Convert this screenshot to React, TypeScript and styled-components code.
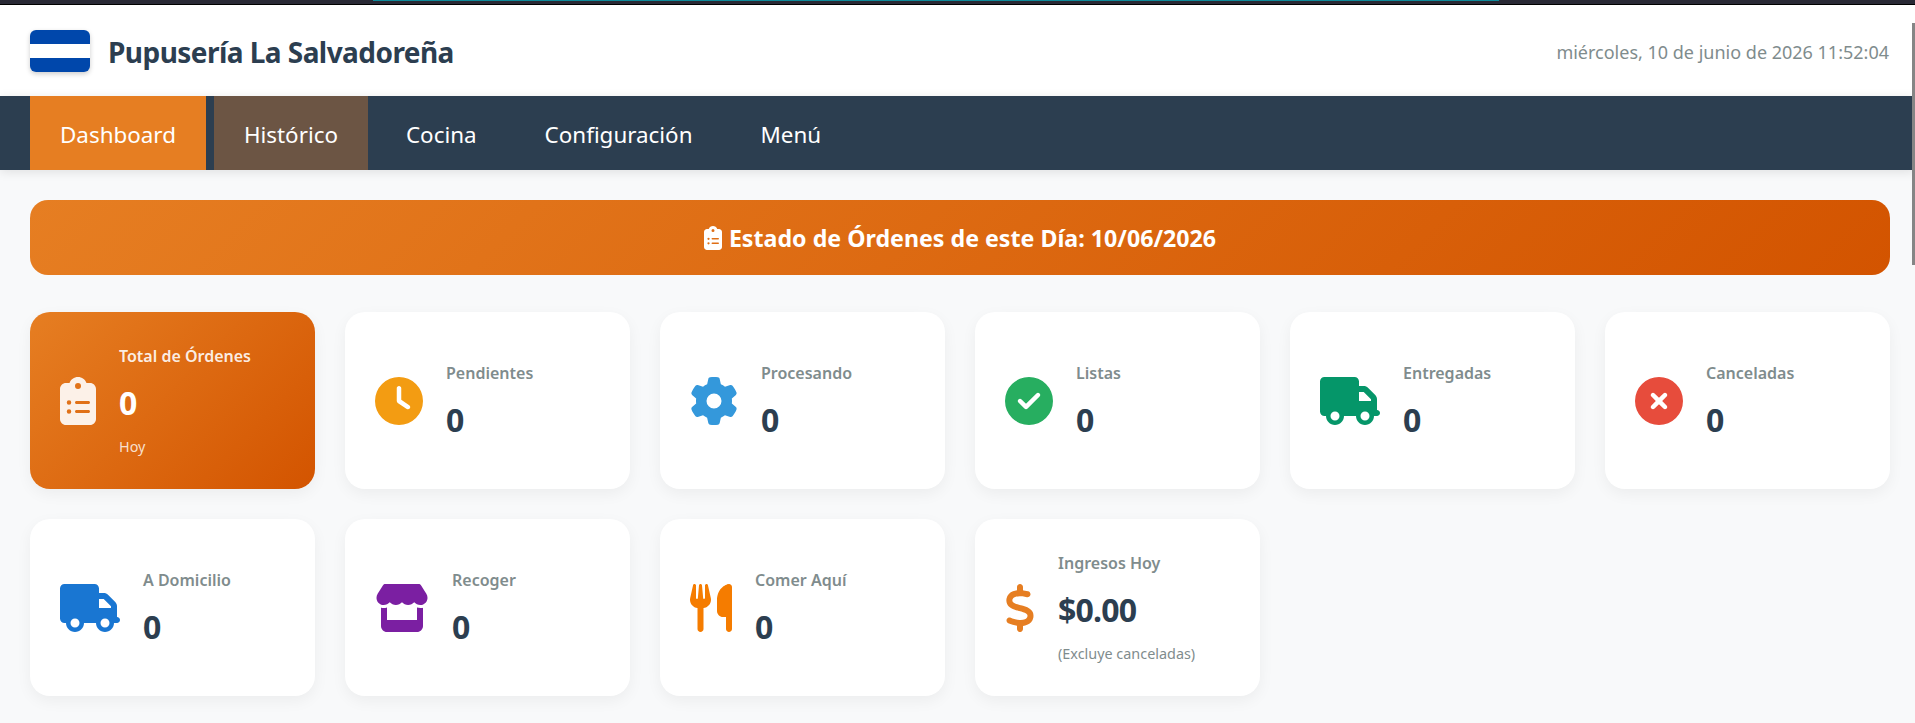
// modules
import React from 'react';
import styled, { createGlobalStyle } from 'styled-components';
import {
  FaCircleCheck,
  FaCircleXmark,
  FaClipboardList,
  FaClock,
  FaDollarSign,
  FaGear,
  FaStore,
  FaTruck,
  FaUtensils
} from 'react-icons/fa6';
import type { IconType } from 'react-icons';


const GlobalStyle = createGlobalStyle`
  html, body {
    margin: 0;
    height: 100%;
    overflow: hidden;
    background-color: #f8f9fa;
    font-family: "Noto Sans", "Open Sans", sans-serif;
  }
`;

const TopStrip = styled.div`
  height: 5px;
  box-sizing: border-box;
  padding-left: 373px;
  background-color: #292935;
  border-bottom: 1px solid #000;
`;

const TopLine = styled.div`
  width: 1126px;
  height: 1px;
  background-color: #0e8a9a;
`;

const ScrollThumb = styled.div`
  position: fixed;
  top: 23px;
  right: 0;
  width: 3px;
  height: 242px;
  background-color: #858585;
`;

const Header = styled.header`
  display: flex;
  align-items: center;
  justify-content: space-between;
  height: 91px;
  padding: 0 26px 0 30px;
  background-color: #fff;
`;

const Brand = styled.div`
  display: flex;
  align-items: center;
  gap: 18px;
`;

const Flag = styled.div`
  display: flex;
  flex-direction: column;
  width: 60px;
  height: 42px;
  border-radius: 6px;
  overflow: hidden;
  box-shadow: 0 2px 5px rgba(0, 0, 0, .2);
`;

const Stripe = styled.div<{ $white?: boolean }>`
  flex: 1;
  background-color: ${({ $white }) => $white ? '#fff' : '#0047ab'};
`;

const Title = styled.h1`
  margin: 2px 0 0;
  font-size: 28px;
  font-weight: 700;
  letter-spacing: -.55px;
  color: #2c3e50;
`;

const DateText = styled.div`
  margin-top: 2px;
  font-size: 18px;
  color: #7f8c8d;
`;

const Nav = styled.nav`
  display: flex;
  gap: 8px;
  height: 74px;
  padding-left: 30px;
  background-color: #2c3e50;
  box-shadow: 0 2px 10px rgba(0, 0, 0, .1);
`;

const Tab = styled.a<{ $state?: 'active' | 'hover' }>`
  display: flex;
  align-items: center;
  padding: 2px 30px 0;
  font-size: 22.4px;
  color: #fff;
  background-color: ${({ $state }) =>
    $state === 'active' ? '#e67e22' : $state === 'hover' ? '#6c5544' : 'transparent'};
`;

const Main = styled.main`
  padding: 30px 25px 0 30px;
`;

const Banner = styled.div`
  display: flex;
  align-items: center;
  justify-content: center;
  gap: 7px;
  height: 75px;
  margin-bottom: 37px;
  border-radius: 18px;
  font-size: 23.2px;
  font-weight: 700;
  color: #fff;
  background: linear-gradient(135deg, #e67e22, #d35400);

  svg {
    width: 18px;
    height: 24px;
  }
`;

const Grid = styled.div`
  display: grid;
  grid-template-columns: repeat(6, 285px);
  grid-auto-rows: 177px;
  gap: 30px;
`;

const Card = styled.div<{ $highlight?: boolean }>`
  display: flex;
  align-items: center;
  gap: 23px;
  padding: 0 30px;
  border-radius: 20px;
  color: ${({ $highlight }) => $highlight ? '#fff' : '#2c3e50'};
  background: ${({ $highlight }) => $highlight ? 'linear-gradient(135deg, #e67e22, #d35400)' : '#fff'};
  box-shadow: 0 5px 15px rgba(0, 0, 0, .05);
`;

// font awesome glyphs keep their own width at a 48px height
const IconSlot = styled.div<{ $color: string, $width: number }>`
  display: flex;
  flex-shrink: 0;
  color: ${({ $color }) => $color};

  svg {
    width: ${({ $width }) => $width}px;
    height: 48px;
  }
`;

const CardBody = styled.div`
  display: flex;
  flex-direction: column;
`;

const Label = styled.div<{ $highlight?: boolean }>`
  font-size: 16px;
  line-height: 22px;
  font-weight: 600;
  color: ${({ $highlight }) => $highlight ? 'rgba(255, 255, 255, .9)' : '#7f8c8d'};
`;

const Value = styled.div`
  margin-top: 17px;
  font-size: 32px;
  line-height: 38px;
  font-weight: 700;
  letter-spacing: -.8px;
`;

const Note = styled.div<{ $highlight?: boolean }>`
  margin-top: 16px;
  font-size: 14.4px;
  line-height: 18px;
  color: ${({ $highlight }) => $highlight ? 'rgba(255, 255, 255, .8)' : '#7f8c8d'};
`;


interface Stat {
  label: string,
  value: string,
  icon: IconType,
  iconWidth: number,
  color: string,
  note?: string,
  highlight?: boolean
}

const stats: Stat[] = [
  { label: 'Total de Órdenes', value: '0', icon: FaClipboardList, iconWidth: 36, color: 'rgba(255, 255, 255, .9)', note: 'Hoy', highlight: true },
  { label: 'Pendientes', value: '0', icon: FaClock, iconWidth: 48, color: '#f39c12' },
  { label: 'Procesando', value: '0', icon: FaGear, iconWidth: 48, color: '#3498db' },
  { label: 'Listas', value: '0', icon: FaCircleCheck, iconWidth: 48, color: '#27ae60' },
  { label: 'Entregadas', value: '0', icon: FaTruck, iconWidth: 60, color: '#059669' },
  { label: 'Canceladas', value: '0', icon: FaCircleXmark, iconWidth: 48, color: '#e74c3c' },
  { label: 'A Domicilio', value: '0', icon: FaTruck, iconWidth: 60, color: '#1976d2' },
  { label: 'Recoger', value: '0', icon: FaStore, iconWidth: 54, color: '#7b1fa2' },
  { label: 'Comer Aquí', value: '0', icon: FaUtensils, iconWidth: 42, color: '#f57c00' },
  { label: 'Ingresos Hoy', value: '$0.00', icon: FaDollarSign, iconWidth: 30, color: '#e67e22', note: '(Excluye canceladas)' }
];

const App = () => {
  return (
    <>
      <GlobalStyle />
      <TopStrip>
        <TopLine />
      </TopStrip>
      <ScrollThumb />
      <Header>
        <Brand>
          <Flag>
            <Stripe />
            <Stripe $white />
            <Stripe />
          </Flag>
          <Title>Pupusería La Salvadoreña</Title>
        </Brand>
        <DateText>miércoles, 10 de junio de 2026 11:52:04</DateText>
      </Header>
      <Nav>
        <Tab $state="active">Dashboard</Tab>
        <Tab $state="hover">Histórico</Tab>
        <Tab>Cocina</Tab>
        <Tab>Configuración</Tab>
        <Tab>Menú</Tab>
      </Nav>
      <Main>
        <Banner>
          <FaClipboardList />
          Estado de Órdenes de este Día: 10/06/2026
        </Banner>
        <Grid>
          {stats.map((stat) => (
            <Card key={stat.label} $highlight={stat.highlight}>
              <IconSlot $color={stat.color} $width={stat.iconWidth}>
                <stat.icon />
              </IconSlot>
              <CardBody>
                <Label $highlight={stat.highlight}>{stat.label}</Label>
                <Value>{stat.value}</Value>
                {stat.note && <Note $highlight={stat.highlight}>{stat.note}</Note>}
              </CardBody>
            </Card>
          ))}
        </Grid>
      </Main>
    </>
  );
}

export default App;
